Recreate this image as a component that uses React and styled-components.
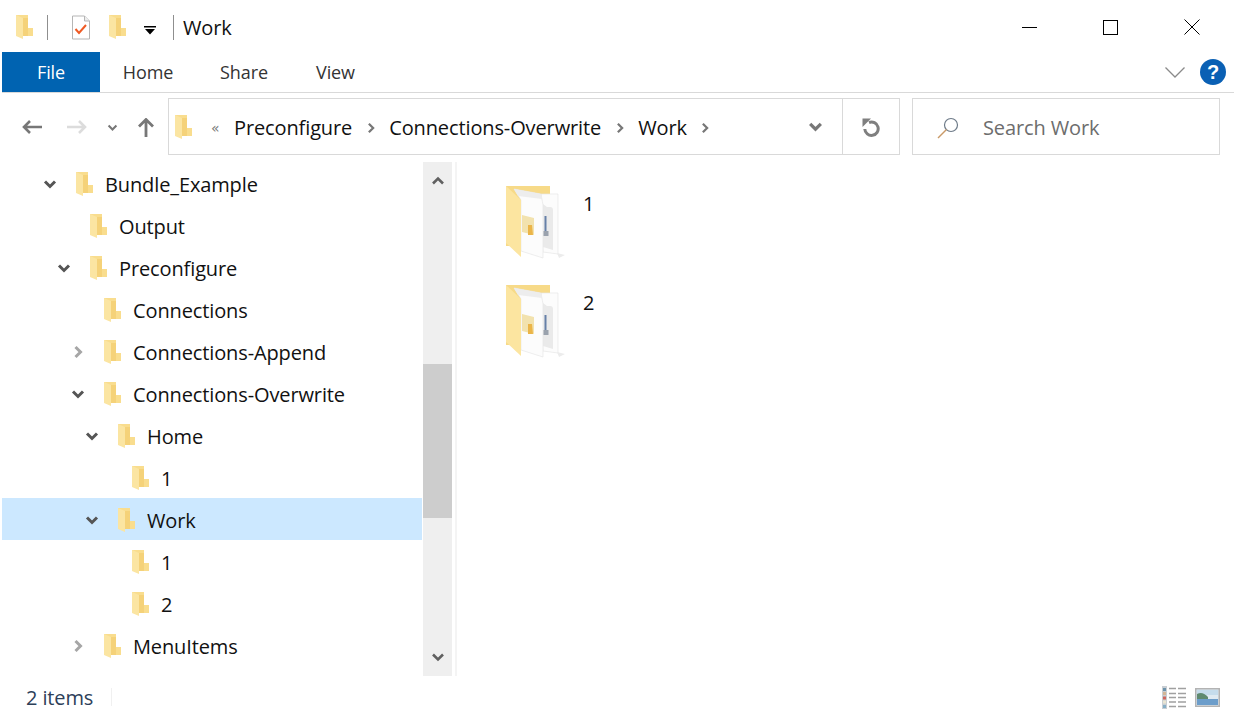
import styled, { createGlobalStyle } from 'styled-components';

const GlobalStyle = createGlobalStyle`
  html, body {
    margin: 0;
    padding: 0;
    background: #fff;
    overflow: hidden;
  }
  * { box-sizing: border-box; }
`;

const Window = styled.div`
  width: 1234px;
  height: 718px;
  display: flex;
  flex-direction: column;
  padding-left: 2px;
  background: #fff;
  color: #000;
  font-family: "Open Sans", "Noto Sans", sans-serif;
  font-size: 20px;
  letter-spacing: -0.12px;
`;

/* title bar */
const TitleBar = styled.div`
  height: 52px;
  display: flex;
  align-items: center;
  padding: 2px 0 0 14px;
`;

const QuickSlot = styled.div`
  display: flex;
  align-items: center;
  justify-content: center;
  width: ${(p) => p.$w}px;
  height: 30px;
  margin-left: ${(p) => p.$ml || 0}px;
  padding-top: ${(p) => p.$pt || 0}px;
`;

const VBar = styled.div`
  width: 1px;
  height: 25px;
  background: #8f8f8f;
  margin: 0 ${(p) => p.$mr || 0}px 0 ${(p) => p.$ml || 0}px;
`;

const TitleText = styled.div`
  margin-left: 9px;
  color: #111;
`;

const WinButtons = styled.div`
  margin-left: auto;
  display: flex;
  align-items: center;
  padding-right: 2px;
`;

const WinButton = styled.div`
  width: 81px;
  height: 30px;
  display: flex;
  align-items: center;
  justify-content: center;
`;

/* ribbon */
const RibbonTabs = styled.div`
  height: 41px;
  display: flex;
  align-items: stretch;
  border-bottom: 1px solid #d9d9d9;
`;

const FileTab = styled.div`
  width: 98px;
  height: 40px;
  background: #0063b1;
  color: #fff;
  display: flex;
  align-items: center;
  justify-content: center;
  font-size: 18px;
`;

const Tab = styled.div`
  width: ${(p) => p.$w}px;
  display: flex;
  align-items: center;
  justify-content: center;
  font-size: 18px;
  color: #333;
`;

const RibbonRight = styled.div`
  margin-left: auto;
  display: flex;
  align-items: center;
  gap: 15px;
  padding-right: 8px;
`;

const HelpBadge = styled.div`
  width: 26px;
  height: 26px;
  border-radius: 50%;
  background: #0a60b4;
  color: #fff;
  font-family: "Liberation Sans", sans-serif;
  font-weight: 700;
  font-size: 20px;
  display: flex;
  align-items: center;
  justify-content: center;
`;

/* address row */
const AddressRow = styled.div`
  height: 68px;
  display: flex;
  align-items: flex-start;
  padding-top: 5px;
`;

const NavButtons = styled.div`
  width: 166px;
  height: 57px;
  display: flex;
  align-items: center;
  padding: 1px 0 0 20px;
`;

const NavSlot = styled.div`
  width: ${(p) => p.$w}px;
  margin-left: ${(p) => p.$ml || 0}px;
  display: flex;
  justify-content: center;
`;

const AddressBox = styled.div`
  width: 732px;
  height: 57px;
  border: 1px solid #d9d9d9;
  display: flex;
  align-items: center;
`;

const CrumbFolder = styled.div`
  margin-left: 6px;
  width: 18px;
  display: flex;
`;

const Crumbs = styled.div`
  flex: 1;
  display: flex;
  align-items: center;
  padding: 2px 0 0 18px;
`;

const CrumbChevrons = styled.span`
  width: 23px;
  font-size: 14px;
  color: #7a7a7a;
  font-family: "DejaVu Sans", sans-serif;
`;

const Crumb = styled.span`
  color: #111;
`;

const CrumbSep = styled.div`
  width: 37px;
  display: flex;
  justify-content: center;
`;

const AddressDrop = styled.div`
  width: 54px;
  display: flex;
  justify-content: center;
`;

const Refresh = styled.div`
  width: 57px;
  height: 100%;
  border-left: 1px solid #d9d9d9;
  display: flex;
  align-items: center;
  justify-content: center;
  padding-top: 1px;
`;

const SearchBox = styled.div`
  width: 308px;
  height: 57px;
  margin-left: 12px;
  border: 1px solid #d9d9d9;
  display: flex;
  align-items: center;
  padding: 2px 0 0 24px;
  gap: 24px;
  color: #6d6d6d;
`;

/* main area */
const Main = styled.div`
  height: 514px;
  display: flex;
  margin-top: 1px;
`;

const Tree = styled.div`
  width: 421px;
  height: 100%;
  overflow: hidden;
`;

const TreeRow = styled.div`
  height: 42px;
  margin-right: 1px;
  display: flex;
  align-items: center;
  padding: 2px 0 0 ${(p) => 38 + p.$depth * 14}px;
  background: ${(p) => (p.$selected ? '#cce8ff' : 'transparent')};
`;

const Twist = styled.div`
  width: 20px;
  display: flex;
  justify-content: center;
`;

const TreeFolder = styled.div`
  width: 18px;
  margin-left: 16px;
  margin-right: 11px;
  display: flex;
`;

const TreeLabel = styled.span`
  color: #111;
`;

const Scrollbar = styled.div`
  width: 29px;
  height: 100%;
  background: #efefef;
  display: flex;
  flex-direction: column;
  align-items: center;
  justify-content: space-between;
  position: relative;
  padding: 12px 0;
`;

const Thumb = styled.div`
  position: absolute;
  left: 0;
  top: 202px;
  width: 29px;
  height: 154px;
  background: #cdcdcd;
`;

const PaneLine = styled.div`
  width: 2px;
  height: 100%;
  margin-left: 3px;
  background: #f4f4f4;
`;

const Content = styled.div`
  flex: 1;
  padding: 23px 0 0 48px;
`;

const FileItem = styled.div`
  height: 99px;
  display: flex;
  align-items: flex-start;
  gap: 16px;
`;

const FileName = styled.div`
  margin-top: 5px;
  color: #111;
`;

/* status bar */
const StatusBar = styled.div`
  height: 42px;
  display: flex;
  align-items: center;
  padding: 0 14px 0 24px;
  color: #2d4059;
`;

const StatusSep = styled.div`
  width: 1px;
  height: 18px;
  margin-left: 18px;
  background: #f0f0f0;
`;

const ViewIcons = styled.div`
  margin-left: auto;
  display: flex;
  align-items: center;
  gap: 9px;
`;

const SmallFolder = () => (
  <svg width="18" height="24" viewBox="0 0 18 24">
    <path d="M0 0h12v13h5v8H0z" fill="#f9dd8e" />
    <path d="M7 3h5v18H7z" fill="#f5d279" />
    <path d="M0 0l7 3v21l-7-3z" fill="#fbe5a2" />
  </svg>
);

const BigFolder = () => (
  <svg width="62" height="76" viewBox="0 0 62 76">
    <defs>
      <filter id="soft" x="-10%" y="-10%" width="120%" height="120%">
        <feGaussianBlur stdDeviation="0.45" />
      </filter>
    </defs>
    <g filter="url(#soft)">
      <path d="M52 68l8 2-6 3z" fill="#ececec" />
      <path d="M1 1h44v10l-8 50H1z" fill="#f7da88" />
      <path d="M36 9h17v60l-15-2z" fill="#fcfcfc" stroke="#e6e6e6" strokeWidth="0.7" />
      <path d="M38 19l4 3h3c2 0 3 1 3 3v40l-10-3z" fill="#eaeaea" />
      <path d="M9 4l27 5 2 11v53L16 66V15z" fill="#fcfcfc" stroke="#e6e6e6" strokeWidth="0.7" />
      <path d="M9 4l27 5 1 5-24-3z" fill="#ededed" />
      <path d="M1 1l15 14v57L1 58z" fill="#fce5a0" />
      <path d="M17 30l12 3v17l-12-3z" fill="#f2e2ae" />
      <path d="M23 40h4l1 10h-5z" fill="#ebb548" />
      <path d="M39.500 31h2v15h-2z" fill="#6680a8" />
      <path d="M38.500 46h5v5h-5z" fill="#9aa2ad" />
    </g>
  </svg>
);

const Chevron = ({ dir = 'down', color = '#666', size = 14, sw = 3 }) => {
  const d = {
    down: 'M2 4.5 7 9.5 12 4.5',
    up: 'M2 9.5 7 4.5 12 9.5',
    right: 'M4.5 2 9.5 7 4.5 12',
  }[dir];
  return (
    <svg width={size} height={size} viewBox="0 0 14 14">
      <path d={d} fill="none" stroke={color} strokeWidth={sw} />
    </svg>
  );
};

const treeItems = [
  { label: 'Bundle_Example', depth: 0, twist: 'down' },
  { label: 'Output', depth: 1 },
  { label: 'Preconfigure', depth: 1, twist: 'down' },
  { label: 'Connections', depth: 2 },
  { label: 'Connections-Append', depth: 2, twist: 'right' },
  { label: 'Connections-Overwrite', depth: 2, twist: 'down' },
  { label: 'Home', depth: 3, twist: 'down' },
  { label: '1', depth: 4 },
  { label: 'Work', depth: 3, twist: 'down', selected: true },
  { label: '1', depth: 4 },
  { label: '2', depth: 4 },
  { label: 'MenuItems', depth: 2, twist: 'right' },
];

export default function App() {
  return (
    <Window>
      <GlobalStyle />
      <TitleBar>
        <QuickSlot $w={18}><SmallFolder /></QuickSlot>
        <VBar $ml={13} $mr={22} />
        <QuickSlot $w={22}>
          <svg width="20" height="25" viewBox="0 0 20 25">
            <path d="M1.500 1h12l5 5v18h-17z" fill="#fff" stroke="#b5b5b5" />
            <path d="M13.500 1v5h5" fill="#eee" stroke="#b5b5b5" />
            <path d="M4.500 14l3.500 4 7-8" fill="none" stroke="#ef5a24" strokeWidth="2" />
          </svg>
        </QuickSlot>
        <QuickSlot $w={18} $ml={17}><SmallFolder /></QuickSlot>
        <QuickSlot $w={12} $ml={17} $pt={6}>
          <svg width="12" height="9" viewBox="0 0 12 9">
            <path d="M0 0h12v1.500H0zM1 3h10L6 8.500z" fill="#000" />
          </svg>
        </QuickSlot>
        <VBar $ml={17} />
        <TitleText>Work</TitleText>
        <WinButtons>
          <WinButton>
            <svg width="15" height="15" viewBox="0 0 15 15"><path d="M0 7.500h15" stroke="#000" fill="none" /></svg>
          </WinButton>
          <WinButton>
            <svg width="15" height="15" viewBox="0 0 15 15"><rect x="0.500" y="0.500" width="14" height="14" fill="none" stroke="#000" /></svg>
          </WinButton>
          <WinButton>
            <svg width="16" height="16" viewBox="0 0 16 16"><path d="M0.500 0.500l15 15M15.500 0.500l-15 15" stroke="#000" fill="none" /></svg>
          </WinButton>
        </WinButtons>
      </TitleBar>

      <RibbonTabs>
        <FileTab>File</FileTab>
        <Tab $w={96}>Home</Tab>
        <Tab $w={96}>Share</Tab>
        <Tab $w={87}>View</Tab>
        <RibbonRight>
          <svg width="20" height="11" viewBox="0 0 20 11"><path d="M0.500 0.500l9.500 9.500 9.500-9.500" fill="none" stroke="#8a8a8a" strokeWidth="1.300" /></svg>
          <HelpBadge>?</HelpBadge>
        </RibbonRight>
      </RibbonTabs>

      <AddressRow>
        <NavButtons>
          <NavSlot $w={20}>
            <svg width="20" height="14" viewBox="0 0 20 14"><path d="M8 1L2 7l6 6M2 7h18" fill="none" stroke="#777" strokeWidth="2.600" /></svg>
          </NavSlot>
          <NavSlot $w={20} $ml={25}>
            <svg width="20" height="14" viewBox="0 0 20 14"><path d="M12 1l6 6-6 6M18 7H0" fill="none" stroke="#dcdcdc" strokeWidth="2.600" /></svg>
          </NavSlot>
          <NavSlot $w={11} $ml={20}><Chevron color="#777" size={11} sw={2.600} /></NavSlot>
          <NavSlot $w={16} $ml={20}>
            <svg width="16" height="19" viewBox="0 0 16 19"><path d="M1 8.500l7-7 7 7M8 2v17" fill="none" stroke="#777" strokeWidth="2.800" /></svg>
          </NavSlot>
        </NavButtons>
        <AddressBox>
          <CrumbFolder><SmallFolder /></CrumbFolder>
          <Crumbs>
            <CrumbChevrons>«</CrumbChevrons>
            <Crumb>Preconfigure</Crumb>
            <CrumbSep><Chevron dir="right" color="#777" size={12} sw={2.600} /></CrumbSep>
            <Crumb>Connections-Overwrite</Crumb>
            <CrumbSep><Chevron dir="right" color="#777" size={12} sw={2.600} /></CrumbSep>
            <Crumb>Work</Crumb>
            <CrumbSep><Chevron dir="right" color="#777" size={12} sw={2.600} /></CrumbSep>
          </Crumbs>
          <AddressDrop><Chevron color="#777" size={15} sw={3} /></AddressDrop>
          <Refresh>
            <svg width="18" height="19" viewBox="0 0 18 19">
              <path d="M7 4.500A6.700 6.700 0 1 1 2.800 11" fill="none" stroke="#7f7f7f" strokeWidth="3" />
              <path d="M0.500 0.500h8.500L0.500 9z" fill="#7f7f7f" />
            </svg>
          </Refresh>
        </AddressBox>
        <SearchBox>
          <svg width="22" height="22" viewBox="0 0 22 22">
            <circle cx="14" cy="8" r="6.500" fill="none" stroke="#6d7a88" strokeWidth="1.200" />
            <path d="M9.500 12.500L1 21" stroke="#c99a68" strokeWidth="1.500" fill="none" />
          </svg>
          <span>Search Work</span>
        </SearchBox>
      </AddressRow>

      <Main>
        <Tree>
          {treeItems.map((item, i) => (
            <TreeRow key={i} $depth={item.depth} $selected={item.selected}>
              <Twist>
                {item.twist === 'down' && <Chevron color="#555" />}
                {item.twist === 'right' && <Chevron dir="right" color="#a6a6a6" />}
              </Twist>
              <TreeFolder><SmallFolder /></TreeFolder>
              <TreeLabel>{item.label}</TreeLabel>
            </TreeRow>
          ))}
        </Tree>
        <Scrollbar>
          <Chevron dir="up" color="#606060" size={14} sw={2.600} />
          <Thumb />
          <Chevron color="#606060" size={14} sw={2.600} />
        </Scrollbar>
        <PaneLine />
        <Content>
          {['1', '2'].map((name) => (
            <FileItem key={name}>
              <BigFolder />
              <FileName>{name}</FileName>
            </FileItem>
          ))}
        </Content>
      </Main>

      <StatusBar>
        <span>2 items</span>
        <StatusSep />
        <ViewIcons>
          <svg width="24" height="23" viewBox="0 0 24 23">
            <rect x="0" y="0" width="5" height="23" fill="#c9ced3" />
            <path d="M1 2h3v3H1z" fill="#6d93ab" />
            <path d="M1 6h3v3H1z" fill="#d3b696" />
            <path d="M1 10.500h3v3H1z" fill="#d0665e" />
            <path d="M1 14.500h3v3H1z" fill="#e9e4d0" />
            <path d="M1 19h3v3H1z" fill="#86aec6" />
            <path d="M7 2.500h7M16 2.500h8M7 7.500h7M16 7.500h8M7 11.500h7M16 11.500h8M7 16h7M16 16h8M7 20.500h7M16 20.500h8" stroke="#a0a0a0" strokeWidth="1.300" fill="none" />
          </svg>
          <svg width="25" height="19" viewBox="0 0 25 19">
            <rect x="0.750" y="0.750" width="23.500" height="17.500" fill="#dfeaf2" stroke="#b3b3b3" strokeWidth="1.500" />
            <path d="M2 2h21v5H2z" fill="#c5dcec" />
            <path d="M2 6c4-2 7-1 11 3v3H2z" fill="#5f8a70" />
            <path d="M2 11h21v6H2z" fill="#6c9dca" />
          </svg>
        </ViewIcons>
      </StatusBar>
    </Window>
  );
}
